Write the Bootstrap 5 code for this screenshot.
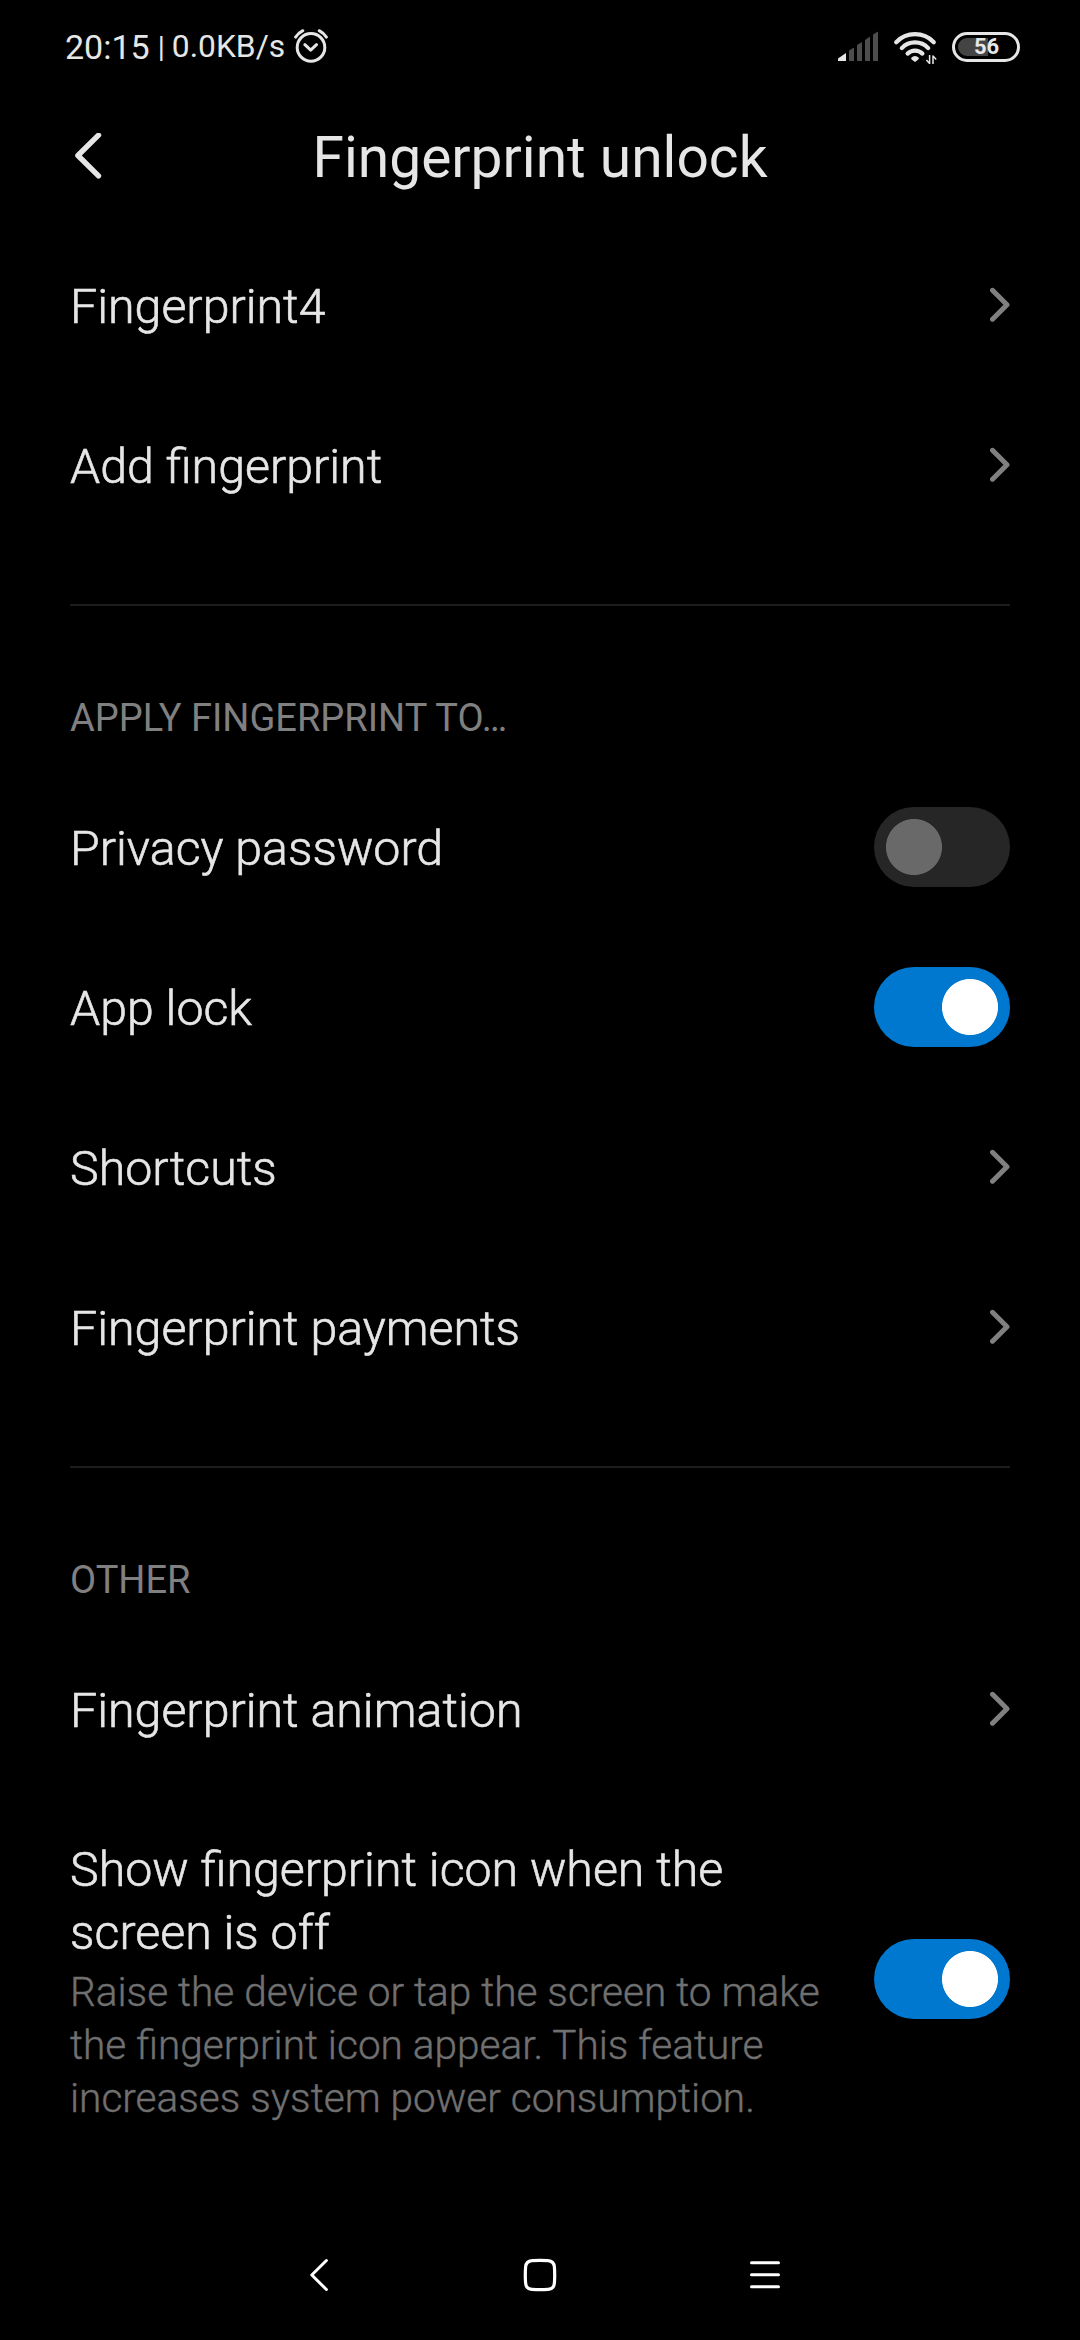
<!DOCTYPE html>
<html lang="en">
<head>
<meta charset="utf-8">
<meta name="viewport" content="width=device-width, initial-scale=1">
<title>Fingerprint unlock</title>
<link href="https://cdn.jsdelivr.net/npm/bootstrap@5.3.0/dist/css/bootstrap.min.css" rel="stylesheet">
<style>
  body { background: #000; color: #e6e6e6; font-family: Roboto, sans-serif; }
  .screen { width: 1080px; height: 2340px; }
  .status-bar { height: 90px; padding: 4px 60px 0 65px; line-height: 1; }
  .clock { font-size: 34px; }
  .pipe { font-size: 29px; margin: 0 7px 0 8px; }
  .speed { font-size: 31.8px; margin-right: 9px; }
  .battery { width: 68px; height: 30px; border: 3px solid #e6e6e6; border-radius: 15px; padding: 3px; }
  .battery-level { height: 18px; border-radius: 9px; background: linear-gradient(90deg, #444 54%, transparent 54%);
    font-size: 22px; font-weight: 700; line-height: 18px; padding-left: 16px; }
  .title-bar { height: 135px; padding: 0 70px; }
  .title-bar h1 { font-size: 56.9px; font-weight: 400; line-height: 66px; }
  .side { width: 40px; }
  .settings { --bs-list-group-bg: transparent; --bs-list-group-color: #e6e6e6; --bs-list-group-border-width: 0; }
  .settings .list-group-item { height: 160px; padding: 0 70px; }
  .settings .list-group-item.tall { height: 380px; }
  .item-title { font-size: 48.3px; font-weight: 300; line-height: 63px; padding-top: 2px; -webkit-text-stroke: .6px #e6e6e6; }
  .tall .item-title { padding-top: 5px; }
  .item-note { font-size: 40.55px; font-weight: 300; line-height: 53px; color: #707070; padding-top: 2px; -webkit-text-stroke: .4px #707070; }
  .tall .item-text { width: 764px; }
  .rule { height: 2px; background: #1c1c1c; margin: 59px 70px 0; }
  .group-label { height: 161px; padding: 64px 70px 0; font-size: 38px; font-weight: 400; line-height: 96px; color: #808080; margin: 0; }
  .settings .form-switch { padding: 0; min-height: 0; margin: 0; }
  .settings .form-check-input { width: 136px; height: 80px; margin: 0; float: none; display: block; border: 0; border-radius: 40px;
    background-color: #262626; background-image: radial-gradient(circle, #696969 27.6px, transparent 28.4px);
    background-size: 80px 80px; background-position: left center; background-repeat: no-repeat; }
  .settings .form-check-input:checked { background-color: #0078d0; background-image: radial-gradient(circle, #fff 27.6px, transparent 28.4px);
    background-position: right center; }
  .nav-keys { height: 130px; padding: 0 300px; }
  svg { display: block; flex: none; fill: none; stroke-linecap: round; stroke-linejoin: round; }
</style>
</head>
<body>
<div class="screen d-flex flex-column overflow-hidden">
  <header>
    <div class="status-bar d-flex align-items-center justify-content-between">
      <div class="d-flex align-items-center">
        <span class="clock">20:15</span><span class="pipe">|</span><span class="speed">0.0KB/s</span>
        <svg width="34" height="36" viewBox="295 30 34 36" stroke="#e6e6e6" stroke-width="3">
          <circle cx="312" cy="48.4" r="13.8"/>
          <path d="M305.9 45.7l5.8 5.4 5.8-5.4M296.6 38.1q3-4.2 7.2-6.4M320.2 31.7q4.2 2.2 7.2 6.4"/>
        </svg>
      </div>
      <div class="d-flex align-items-center">
        <svg width="114" height="34" viewBox="838 30 114 34">
          <path fill="#e6e6e6" d="M838 58.5l8-5.5v8h-8z"/>
          <path fill="#4d4d4d" d="M849 50.5l5-3V61h-5zM857 45l5-3V61h-5zM865 40l5-3.5V61h-5zM873 34.5l5-3V61h-5z"/>
          <g stroke="#e6e6e6" stroke-width="4.2">
            <path d="M896.2 42.2a26 26 0 0 1 37.6 0M901.8 48.1a18.3 18.3 0 0 1 26.4 0M907.6 53.6a10.8 10.8 0 0 1 14.8 0"/>
          </g>
          <path fill="#e6e6e6" d="M911 58q4-4 8 0q0 1.5-4 4q-4-2.5-4-4z"/>
          <path stroke="#e6e6e6" stroke-width="1.5" stroke-linecap="butt" d="M926.4 60l3.2 3.4V55M933 64.5V56l3.2 3.4"/>
        </svg>
        <div class="battery"><div class="battery-level">56</div></div>
      </div>
    </div>
    <div class="title-bar d-flex align-items-center justify-content-between">
      <svg class="side" width="40" height="50" viewBox="70 132.5 40 50" stroke="#e6e6e6" stroke-width="5.4"><path d="M98.5 134.7L77.9 155l20.6 20.3"/></svg>
      <h1 class="m-0">Fingerprint unlock</h1>
      <span class="side"></span>
    </div>
  </header>

  <main class="flex-grow-1">
    <div class="list-group settings rounded-0">
      <div class="list-group-item d-flex align-items-center justify-content-between">
        <span class="item-title">Fingerprint4</span>
        <svg width="20" height="36" viewBox="990 287 20 36" stroke="#808080" stroke-width="5"><path d="M992.5 290.3L1007 304.7l-14.5 14.5"/></svg>
      </div>
      <div class="list-group-item d-flex align-items-center justify-content-between">
        <span class="item-title">Add fingerprint</span>
        <svg width="20" height="36" viewBox="990 287 20 36" stroke="#808080" stroke-width="5"><path d="M992.5 290.3L1007 304.7l-14.5 14.5"/></svg>
      </div>
    </div>

    <div class="rule"></div>
    <h2 class="group-label">APPLY FINGERPRINT TO…</h2>
    <div class="list-group settings rounded-0">
      <div class="list-group-item d-flex align-items-center justify-content-between">
        <label class="item-title" for="privacy">Privacy password</label>
        <div class="form-check form-switch"><input class="form-check-input" type="checkbox" role="switch" id="privacy"></div>
      </div>
      <div class="list-group-item d-flex align-items-center justify-content-between">
        <label class="item-title" for="applock">App lock</label>
        <div class="form-check form-switch"><input class="form-check-input" type="checkbox" role="switch" id="applock" checked></div>
      </div>
      <div class="list-group-item d-flex align-items-center justify-content-between">
        <span class="item-title">Shortcuts</span>
        <svg width="20" height="36" viewBox="990 287 20 36" stroke="#808080" stroke-width="5"><path d="M992.5 290.3L1007 304.7l-14.5 14.5"/></svg>
      </div>
      <div class="list-group-item d-flex align-items-center justify-content-between">
        <span class="item-title">Fingerprint payments</span>
        <svg width="20" height="36" viewBox="990 287 20 36" stroke="#808080" stroke-width="5"><path d="M992.5 290.3L1007 304.7l-14.5 14.5"/></svg>
      </div>
    </div>

    <div class="rule"></div>
    <h2 class="group-label">OTHER</h2>
    <div class="list-group settings rounded-0">
      <div class="list-group-item d-flex align-items-center justify-content-between">
        <span class="item-title">Fingerprint animation</span>
        <svg width="20" height="36" viewBox="990 287 20 36" stroke="#808080" stroke-width="5"><path d="M992.5 290.3L1007 304.7l-14.5 14.5"/></svg>
      </div>
      <div class="list-group-item tall d-flex align-items-center justify-content-between">
        <label class="item-text" for="icon-off">
          <span class="item-title d-block">Show fingerprint icon when the screen is off</span>
          <span class="item-note d-block">Raise the device or tap the screen to make the fingerprint icon appear. This feature increases system power consumption.</span>
        </label>
        <div class="form-check form-switch"><input class="form-check-input" type="checkbox" role="switch" id="icon-off" checked></div>
      </div>
    </div>
  </main>

  <footer class="nav-keys d-flex align-items-center justify-content-between">
    <svg width="40" height="40" viewBox="300 2255 40 40" stroke="#fff" stroke-width="3"><path d="M326.4 2260.5L311.8 2275l14.6 14.5"/></svg>
    <svg width="40" height="40" viewBox="520 2255 40 40" stroke="#fff" stroke-width="3.2"><path d="M532 2260.6Q540 2260 548 2260.6Q554 2261 554.4 2267Q555 2275 554.4 2283Q554 2289 548 2289.4Q540 2290 532 2289.4Q526 2289 525.6 2283Q525 2275 525.6 2267Q526 2261 532 2260.6z"/></svg>
    <svg width="40" height="40" viewBox="740 2255 40 40" stroke="#fff" stroke-width="3"><path d="M751.5 2262.7h27M751.5 2274.7h27M751.5 2286.7h27"/></svg>
  </footer>
</div>
<script src="https://cdn.jsdelivr.net/npm/bootstrap@5.3.0/dist/js/bootstrap.bundle.min.js"></script>
</body>
</html>
